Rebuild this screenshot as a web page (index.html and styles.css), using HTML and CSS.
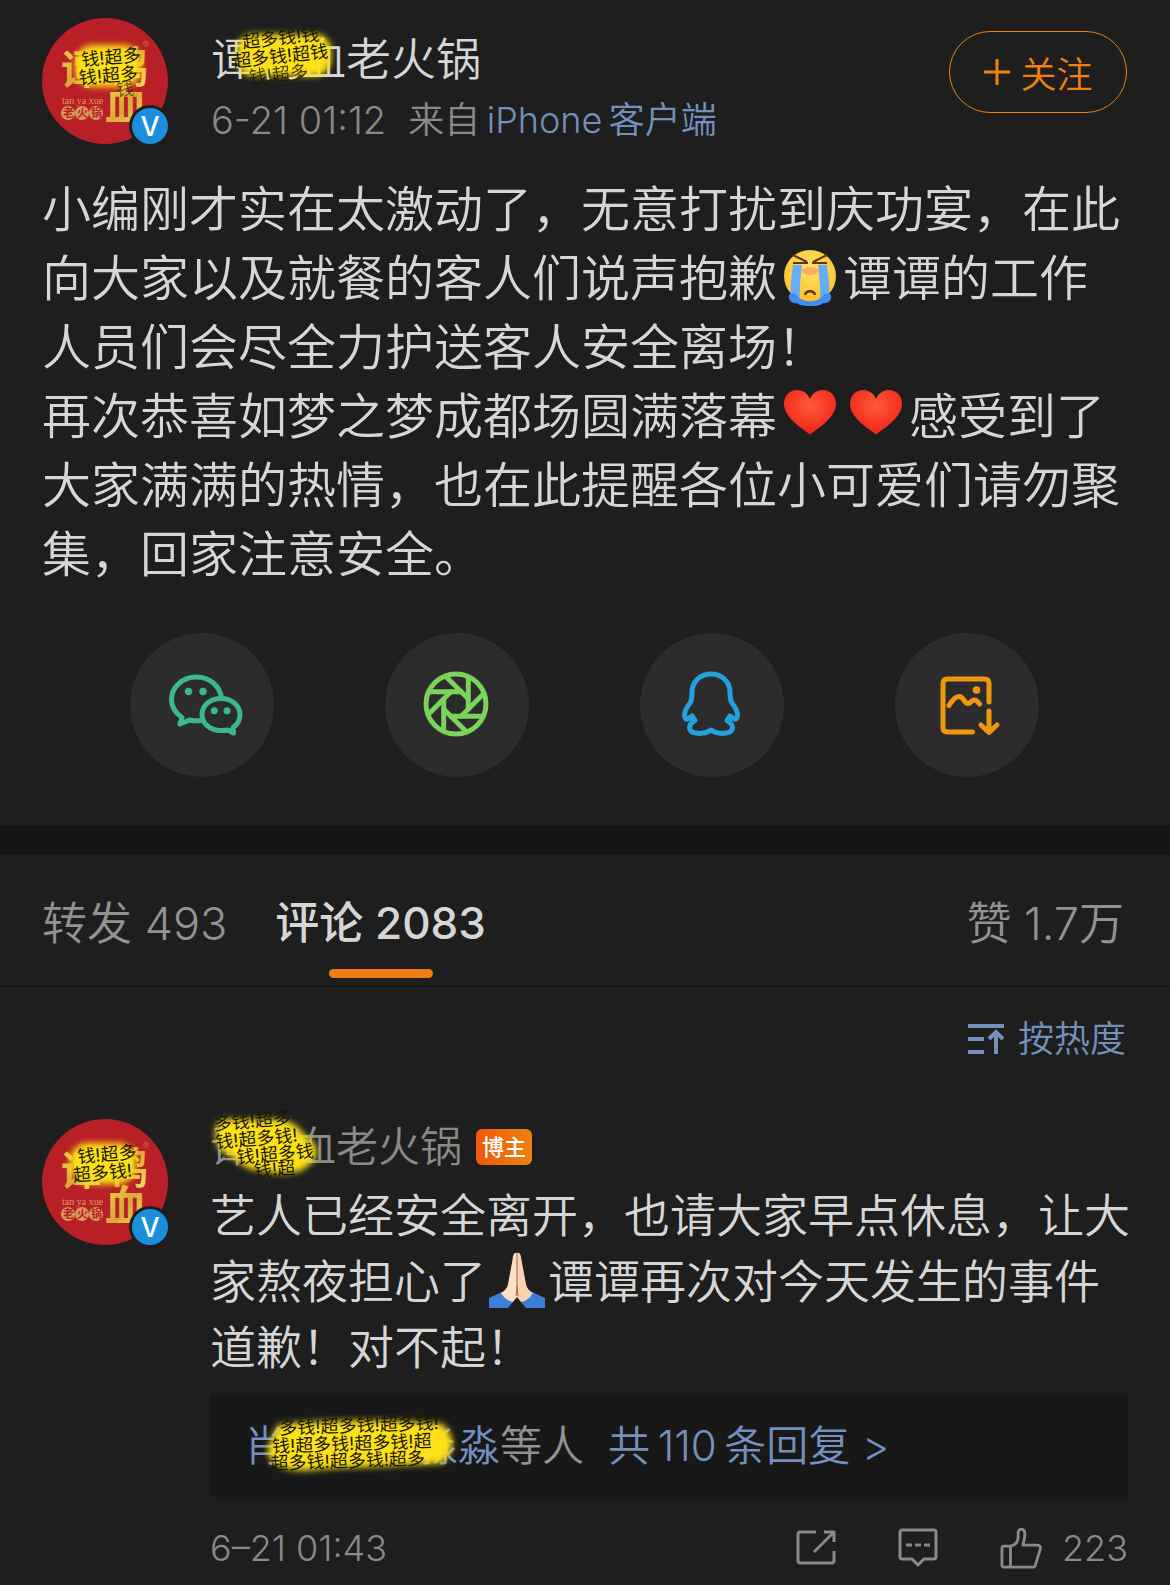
FILE: index.html
```html
<!DOCTYPE html>
<html lang="zh-CN">
<head>
    <meta charset="UTF-8">
    <meta name="viewport" content="width=device-width, initial-scale=1.0">
    <title>微博正文</title>
    <link rel="stylesheet" href="styles.css">
</head>
<body>

<!-- shared shapes -->
<svg class="defs" aria-hidden="true">
    <defs>
        <filter id="soft" x="-20%" y="-30%" width="140%" height="160%">
            <feGaussianBlur stdDeviation="3"/>
        </filter>
        <linearGradient id="gold" x1="0" y1="0" x2="1" y2="1">
            <stop offset="0" stop-color="#f3d44e"/>
            <stop offset="0.5" stop-color="#d9a834"/>
            <stop offset="1" stop-color="#f5e667"/>
        </linearGradient>
        <radialGradient id="face" cx="0.5" cy="0.35" r="0.65">
            <stop offset="0" stop-color="#ffe36a"/>
            <stop offset="1" stop-color="#fbc02c"/>
        </radialGradient>
        <radialGradient id="red" cx="0.5" cy="0.35" r="0.7">
            <stop offset="0" stop-color="#ff5a3c"/>
            <stop offset="1" stop-color="#f01e14"/>
        </radialGradient>
        <symbol id="logo" viewBox="0 0 126 126">
            <circle cx="63" cy="63" r="63" fill="#b81f26"/>
            <g fill="url(#gold)" class="logo-brush">
                <text x="19" y="66" font-size="40">谭</text>
                <text x="64" y="64" font-size="42">鸭</text>
                <text x="63" y="102" font-size="42">血</text>
            </g>
            <text class="logo-latin" x="20" y="86">tan ya xue</text>
            <g fill="#d99a5b">
                <circle cx="26" cy="95" r="7"/>
                <circle cx="40" cy="95" r="7"/>
                <circle cx="54" cy="95" r="7"/>
            </g>
            <g fill="#b81f26" font-size="11" font-weight="700">
                <text x="21" y="99">老</text>
                <text x="35" y="99">火</text>
                <text x="49" y="99">锅</text>
            </g>
            <text x="101" y="30" font-size="9" fill="#d9714b">®</text>
        </symbol>
        <symbol id="heart" viewBox="0 0 52 45">
            <path d="M26 44.500C10 33 0 25 0 13.500C0 5.500 6 0 13 0C19 0 24 3.500 26 9C28 3.500 33 0 39 0C46 0 52 5.500 52 13.500C52 25 42 33 26 44.500Z" fill="url(#red)"/>
        </symbol>
    </defs>
</svg>

<article class="post">
    <header class="post-head">
        <div class="avatar">
            <svg class="avatar-img" viewBox="0 0 126 126" role="img" aria-label="头像">
                <use href="#logo"/>
                <rect x="33" y="27" width="66" height="42" rx="18" fill="#fde012" filter="url(#soft)"/>
                <g class="scribble" transform="rotate(-5 66 48)">
                    <text x="40" y="46">钱!超多</text>
                    <text x="36" y="64">钱!超多</text>
                    <text x="72" y="79" opacity="0.6">钱</text>
                </g>
            </svg>
            <svg class="verified" viewBox="0 0 42 42" aria-hidden="true">
                <circle cx="21" cy="21" r="21" fill="#1e1e1e"/>
                <circle cx="21" cy="21" r="18" fill="#1b8fdb"/>
                <text x="21" y="31" text-anchor="middle">V</text>
            </svg>
        </div>
        <div class="post-who">
            <h1 class="post-name">谭鸭血老火锅
                <svg class="mask mask-name" viewBox="0 0 120 64" aria-hidden="true">
                    <rect x="12" y="10" width="94" height="42" rx="16" fill="#fde012" filter="url(#soft)"/>
                    <g class="scribble" transform="rotate(-6 60 32)">
                        <text x="19" y="20">超多钱!钱</text>
                        <text x="8" y="38">超多钱!超钱</text>
                        <text x="22" y="56" opacity="0.8">钱!超多</text>
                    </g>
                </svg>
            </h1>
            <p class="post-meta"><time>6-21 01:12</time><span>来自&thinsp;<a href="#">iPhone&thinsp;客户端</a></span></p>
        </div>
        <button class="follow" type="button">
            <svg width="28" height="28" viewBox="0 0 28 28" aria-hidden="true"><path d="M14 1v26M1 14h26"/></svg>
            关注
        </button>
    </header>

    <div class="post-text">
        <p>小编刚才实在太激动了，无意打扰到庆功宴，在此向大家以及就餐的客人们说声抱歉<svg class="emoji" width="52" height="56" viewBox="0 0 52 56" role="img" aria-label="大哭">
            <circle cx="26" cy="26" r="26" fill="url(#face)"/>
            <ellipse cx="26" cy="21" rx="8" ry="4" fill="#f08a52" opacity="0.55"/>
            <path d="M9 15H18C17 26 15 36 16 50C12 51 8 48 7 44C6 34 8 25 9 15Z" fill="#64aef7"/>
            <path d="M34 15H43C44 25 46 34 45 44C44 48 40 51 36 50C37 36 35 26 34 15Z" fill="#64aef7"/>
            <path d="M5 45C8 42 13 44 15 48C20 52 32 52 37 48C39 44 44 42 47 45C48 51 43 54 39 53C36 56 31 56 26 56C21 56 16 56 13 53C9 54 4 51 5 45Z" fill="#3f8df0"/>
            <path d="M16 46C20 53 32 53 36 46Z" fill="#fbc02c"/>
            <path d="M9 5L23 12M9 13H24M43 5L29 12M43 13H28" fill="none" stroke="#6b3410" stroke-width="2"/>
            <path d="M21 45C22 40 30 40 31 45" fill="none" stroke="#6b3410" stroke-width="2.500"/>
        </svg>谭谭的工作人员们会尽全力护送客人安全离场！</p>
        <p>再次恭喜如梦之梦成都场圆满落幕<svg class="emoji heart" width="52" height="45" role="img" aria-label="红心"><use href="#heart"/></svg><svg class="emoji heart" width="52" height="45" role="img" aria-label="红心"><use href="#heart"/></svg>感受到了大家满满的热情，也在此提醒各位小可爱们请勿聚集，回家注意安全。</p>
    </div>

    <div class="share">
        <button type="button" aria-label="微信">
            <svg viewBox="0 0 144 144" stroke="#3db88e">
                <path d="M91.500 65C90 53 79.500 44 66.500 44C52.500 44 41.500 54 41.500 66.500C41.500 74 45.500 80 52 84.500L50 91L59.500 87C63 88 68 88 72 87.500"/>
                <path d="M91 65.500C80 65.500 72 72.500 72 81.500C72 90.500 80 97.500 91 97.500C93.500 97.500 96 97.500 98 97L103.500 100L103 94.500C107.500 91.500 110 87 110 81.500C110 72.500 101.500 65.500 91 65.500Z"/>
                <g fill="#3db88e" stroke="none">
                    <circle cx="58.500" cy="58.500" r="3.700"/>
                    <circle cx="73" cy="58.500" r="3.700"/>
                    <circle cx="84.300" cy="77.700" r="3.500"/>
                    <circle cx="97" cy="77.700" r="3.500"/>
                </g>
            </svg>
        </button>
        <button type="button" aria-label="朋友圈">
            <svg viewBox="0 0 144 144" stroke="#7ad35c">
                <g transform="translate(71 71)">
                    <circle r="30"/>
                    <path d="M-27 -12.300H5"/>
                    <path d="M-27 -12.300H5" transform="rotate(45)"/>
                    <path d="M-27 -12.300H5" transform="rotate(90)"/>
                    <path d="M-27 -12.300H5" transform="rotate(135)"/>
                    <path d="M-27 -12.300H5" transform="rotate(180)"/>
                    <path d="M-27 -12.300H5" transform="rotate(225)"/>
                    <path d="M-27 -12.300H5" transform="rotate(270)"/>
                    <path d="M-27 -12.300H5" transform="rotate(315)"/>
                </g>
            </svg>
        </button>
        <button type="button" aria-label="QQ">
            <svg viewBox="0 0 144 144" stroke="#22a1dc">
                <path d="M71 41C60 41 52 49 52 59C52 64 52 67 50 70C46.500 74.500 44.500 78 44.500 82C44.500 86 46 87 48.500 85.500L52 83L55 87.500C50.500 90 49.500 92 49.500 95C50 101.500 64 102 71 97C78 102 92 101.500 92.500 95C92.500 92 91.500 90 87 87.500L90 83L93.500 85.500C96 87 97.500 86 97.500 82C97.500 78 95.500 74.500 92 70C90 67 90 64 90 59C90 49 82 41 71 41Z"/>
                <path d="M51 85.500L53 88M91 85.500L89 88"/>
            </svg>
        </button>
        <button type="button" aria-label="保存图片">
            <svg viewBox="0 0 144 144" stroke="#ee970f">
                <path d="M94 69V50.500C94 47.500 92.500 46 89.500 46H52.500C49.500 46 48 47.500 48 50.500V94.500C48 97.500 49.500 99 52.500 99H77.500"/>
                <path d="M54 72.500C58 66 61 63.500 64 63.500C69 63.500 69 70.500 73 70.500C76 70.500 76 67 79 67C81 67 83 68.500 84.500 71"/>
                <path d="M94 78V99M86 92L94 99.500L102 92"/>
                <circle cx="81.500" cy="57" r="3.800" fill="#ee970f" stroke="none"/>
            </svg>
        </button>
    </div>
</article>

<nav class="tabs">
    <button class="tab" type="button">转发 493</button>
    <button class="tab active" type="button">评论 2083</button>
    <button class="tab likes" type="button">赞 1.7万</button>
</nav>

<section class="comments">
    <button class="sort" type="button">
        <svg width="36" height="32" viewBox="0 0 36 32" aria-hidden="true"><path d="M0 3H36M0 16H16M0 29H16M28 31V9M21 16L28 9L35 16"/></svg>
        按热度
    </button>

    <div class="comment">
        <div class="avatar">
            <svg class="avatar-img" viewBox="0 0 126 126" role="img" aria-label="头像">
                <use href="#logo"/>
                <rect x="28" y="24" width="66" height="41" rx="18" fill="#fde012" filter="url(#soft)"/>
                <g class="scribble" transform="rotate(-5 62 44)">
                    <text x="36" y="42">钱!超多</text>
                    <text x="30" y="60">超多钱!</text>
                </g>
            </svg>
            <svg class="verified" viewBox="0 0 42 42" aria-hidden="true">
                <circle cx="21" cy="21" r="21" fill="#1e1e1e"/>
                <circle cx="21" cy="21" r="18" fill="#1b8fdb"/>
                <text x="21" y="31" text-anchor="middle">V</text>
            </svg>
        </div>
        <div class="comment-main">
            <h2 class="comment-name"><span>谭鸭血老火锅</span><span class="badge">博主</span>
                <svg class="mask mask-comment" viewBox="0 0 120 72" aria-hidden="true">
                    <path d="M14 8H70C86 10 92 18 98 26C112 32 112 48 100 54C94 64 70 64 52 60C34 58 30 48 16 42C6 36 4 14 14 8Z" fill="#fde012" filter="url(#soft)"/>
                    <g class="scribble" transform="rotate(-5 60 36)">
                        <text x="8" y="15">多钱!超多</text>
                        <text x="8" y="33">钱!超多钱!</text>
                        <text x="28" y="50">钱!超多钱</text>
                        <text x="44" y="65">钱!超</text>
                    </g>
                </svg>
            </h2>
            <p class="comment-text">艺人已经安全离开，也请大家早点休息，让大家熬夜担心了<svg class="emoji pray" width="56" height="56" viewBox="0 0 56 56" role="img" aria-label="双手合十">
                <path d="M0 46L13 40L24 50L19 56H0Z" fill="#3d7fd6"/>
                <path d="M56 46L43 40L32 50L37 56H56Z" fill="#3d7fd6"/>
                <path d="M28 1C25 0 24 3 23.500 8L19 32C18 37 15 39 12 41C15 46 19 49 24 50L28 45Z" fill="#fbe0c4"/>
                <path d="M28 1C31 0 32 3 32.500 8L37 32C38 37 41 39 44 41C41 46 37 49 32 50L28 45Z" fill="#f7d3b2"/>
                <path d="M28 1V34L27 44M28 34L29 44" fill="none" stroke="#a5654a"/>
            </svg>谭谭再次对今天发生的事件道歉！对不起！</p>
            <div class="replies">
                <a class="reply-user" href="#"><span class="reply-hidden">肖</span>淼淼
                    <svg class="mask mask-reply" viewBox="0 0 210 64" aria-hidden="true">
                        <path d="M26 12C70 6 150 6 190 11C204 22 204 40 190 50C140 54 90 54 60 57C30 60 14 50 16 34Z" fill="#fde012" filter="url(#soft)"/>
                        <g class="scribble" transform="rotate(-2 100 32)">
                            <text x="28" y="19">多钱!超多钱!超多钱!</text>
                            <text x="20" y="37">钱!超多钱!超多钱!超</text>
                            <text x="18" y="54">超多钱!超多钱!超多</text>
                        </g>
                    </svg>
                </a><span>等人</span>
                <a class="reply-total" href="#">共&thinsp;110&thinsp;条回复 &gt;</a>
            </div>
            <footer class="comment-foot">
                <time>6–21 01:43</time>
                <button type="button" aria-label="转发"><svg width="40" height="40" viewBox="0 0 40 40"><path d="M20 4H4C3 4 2 5 2 6V33C2 34 3 35 4 35H36C37 35 38 34 38 33V23M28 4H38V14M38 4L18 24"/></svg></button>
                <button type="button" aria-label="评论"><svg width="40" height="40" viewBox="0 0 40 40"><path d="M4 2H36C37 2 38 3 38 4V29C38 30 37 31 36 31H26L20 37L14 31H4C3 31 2 30 2 29V4C2 3 3 2 4 2Z"/><path d="M8 17H14M17 17H23M26 17H32"/></svg></button>
                <button class="like" type="button"><svg width="42" height="42" viewBox="0 0 44 44" aria-hidden="true"><path d="M4 20H11V42H4C3 42 2 41 2 40V22C2 21 3 20 4 20ZM11 20C16 19 19 16 19 10V6C19 1 26 1 26 7C26 11 25 15 24 19H39C42 19 43 21 42 24L37 40C37 41 36 42 35 42H11"/></svg>223</button>
            </footer>
        </div>
    </div>
</section>

</body>
</html>
```
FILE: styles.css
```css
* {
    box-sizing: border-box;
}
body {
    margin: 0;
    background-color: #1e1e1e;
    color: #d6d6d6;
    font-family: Inter, "Noto Sans CJK SC", sans-serif;
    font-weight: 350;
}
h1, h2, p {
    margin: 0;
    font-weight: inherit;
}
a {
    color: #7390bf;
    text-decoration: none;
}
button {
    padding: 0;
    border: 0;
    background: none;
    color: inherit;
    font: inherit;
    cursor: pointer;
}
svg {
    display: block;
}
.defs {
    position: absolute;
    width: 0;
    height: 0;
}

/* avatar */
.avatar {
    position: relative;
    flex: none;
    width: 126px;
    height: 126px;
}
.avatar-img {
    width: 100%;
    height: 100%;
}
.logo-brush {
    font-weight: 700;
}
.logo-latin {
    fill: #d99a5b;
    font-family: "Liberation Serif", serif;
    font-size: 10px;
}
.verified {
    position: absolute;
    right: -3px;
    bottom: -3px;
    width: 42px;
    height: 42px;
    fill: #fff;
    font-size: 27px;
    font-weight: 500;
}
.scribble {
    fill: #1a1700;
    font-size: 18px;
    font-weight: 400;
}
.mask {
    position: absolute;
    overflow: visible;
}

/* post */
.post {
    padding: 18px 43px 48px 42px;
    border-bottom: 30px solid #151515;
}
.post-head {
    display: flex;
    gap: 43px;
}
.post-who {
    flex: 1;
    padding-top: 12px;
}
.post-name {
    position: relative;
    font-size: 45px;
    line-height: 60px;
}
.mask-name {
    left: 14px;
    top: -6px;
    width: 120px;
    height: 64px;
}
.post-meta {
    display: flex;
    gap: 22px;
    color: #8a8a8a;
    font-size: 36px;
    line-height: 60px;
}
.post-meta time {
    font-size: 38px;
}
.follow {
    display: flex;
    align-items: center;
    justify-content: center;
    gap: 9px;
    width: 178px;
    height: 82px;
    margin-top: 13px;
    border: 1px solid #ee8111;
    border-radius: 41px;
    color: #ee8111;
    font-size: 36px;
}
.follow svg {
    fill: none;
    stroke: #ee8111;
    stroke-width: 3;
}
.post-text {
    margin-top: 25px;
    font-size: 49px;
    line-height: 69px;
}
.emoji {
    display: inline-block;
    margin: -10px 7px;
    vertical-align: 0;
}
.emoji.heart {
    vertical-align: 9px;
}
.emoji.pray {
    margin: -10px 3px;
}

.share {
    display: grid;
    grid-template-columns: repeat(4, 1fr);
    justify-items: center;
    margin-top: 44px;
    padding: 0 33px;
}
.share button {
    width: 144px;
    height: 144px;
    border-radius: 50%;
    background-color: #2c2c2c;
}
.share svg {
    fill: none;
    stroke-width: 5;
    stroke-linecap: round;
    stroke-linejoin: round;
}

/* tabs */
.tabs {
    display: flex;
    gap: 48px;
    height: 132px;
    padding: 0 46px 0 42px;
    border-bottom: 2px solid #151515;
    color: #929292;
    font-size: 45px;
}
.tab {
    position: relative;
}
.tab.active {
    color: #d6d6d6;
    font-size: 44px;
    font-weight: 500;
}
.tab.active::after {
    content: "";
    position: absolute;
    left: 50%;
    bottom: 7px;
    width: 104px;
    height: 9px;
    margin-left: -52px;
    border-radius: 5px;
    background-color: #ee8111;
}
.tab.likes {
    margin-left: auto;
}

/* comments */
.comments {
    padding: 22px 40px 0 42px;
}
.sort {
    display: flex;
    align-items: center;
    gap: 14px;
    margin-left: auto;
    padding-right: 4px;
    color: #7390bf;
    font-size: 36px;
    line-height: 60px;
}
.sort svg {
    fill: none;
    stroke: #7390bf;
    stroke-width: 4;
}
.comment {
    display: flex;
    gap: 42px;
    margin-top: 50px;
}
.comment-main {
    flex: 1;
}
.comment-name {
    position: relative;
    display: flex;
    align-items: center;
    gap: 14px;
    color: #8a8a8a;
    font-size: 42px;
    line-height: 56px;
}
.mask-comment {
    left: -2px;
    top: -8px;
    width: 120px;
    height: 72px;
}
.badge {
    width: 56px;
    border-radius: 6px;
    background: linear-gradient(to right, #ee5a0a, #ee8111);
    color: #fff;
    font-size: 22px;
    font-weight: 500;
    line-height: 36px;
    text-align: center;
}
.comment-text {
    margin-top: 7px;
    font-size: 46px;
    line-height: 66px;
}
.replies {
    display: flex;
    margin: 15px 2px 0 0;
    padding: 22px 34px;
    background-color: #181818;
    color: #929292;
    font-size: 42px;
    line-height: 58px;
}
.reply-user {
    position: relative;
}
.reply-hidden {
    display: inline-block;
    width: 172px;
}
.mask-reply {
    left: 8px;
    top: -4px;
    width: 210px;
    height: 64px;
}
.reply-total {
    margin-left: 24px;
}
.comment-foot {
    display: flex;
    align-items: center;
    gap: 62px;
    margin-right: 2px;
    padding: 21px 0 6px;
    color: #8a8a8a;
    font-size: 36px;
    line-height: 60px;
}
.comment-foot time {
    margin-right: auto;
    font-weight: 300;
}
.comment-foot svg {
    fill: none;
    stroke: #8a8a8a;
    stroke-width: 3;
    stroke-linejoin: round;
}
.like {
    display: flex;
    align-items: center;
    gap: 20px;
}
```
